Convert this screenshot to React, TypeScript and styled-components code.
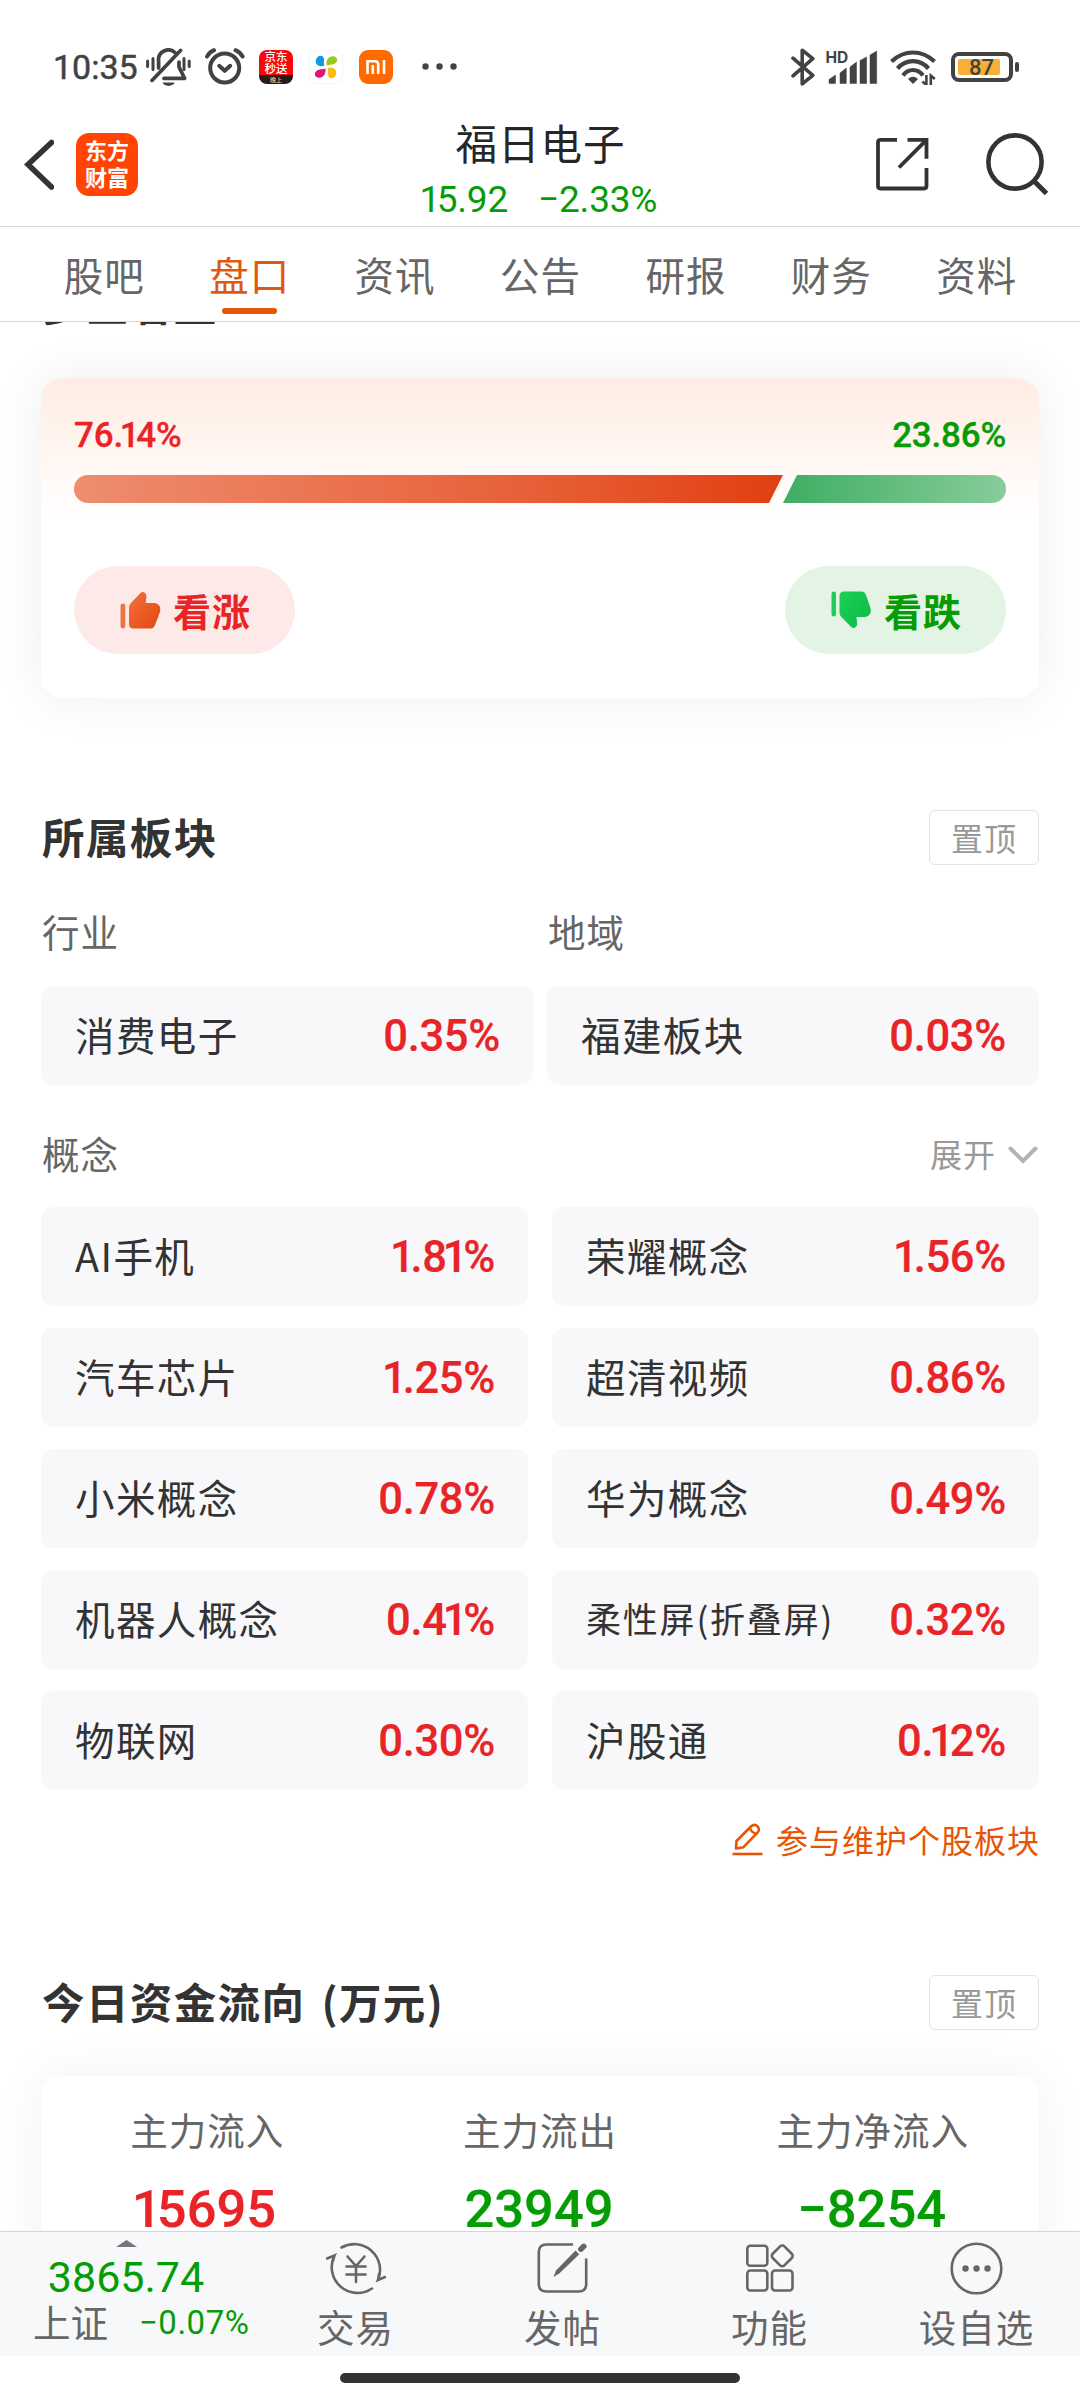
import React from 'react';
import styled, { createGlobalStyle } from 'styled-components';

const RED = '#e92427';
const GREEN = '#069c06';
const ORANGE = '#e65506';
const CJK = "'Noto Sans CJK SC', sans-serif";
const NUM = "Roboto, 'Noto Sans CJK SC', sans-serif";

const GlobalStyle = createGlobalStyle`
  *, *::before, *::after { box-sizing: border-box; }
  body { margin: 0; background: #fff; font-family: ${CJK}; }
  svg { display: block; flex: none; }
`;

const Page = styled.div`
  width: 1080px;
  height: 2400px;
  display: flex;
  flex-direction: column;
  overflow: hidden;
  background: #fff;
  color: #333;
`;

/* ---------- status bar ---------- */

const StatusBar = styled.div`
  flex: none;
  height: 88px;
  padding: 45px 61px 0 53px;
  display: flex;
  justify-content: space-between;
`;

const StatusGroup = styled.div`
  height: 43px;
  display: flex;
  align-items: center;
`;

const Slot = styled.div<{ $gap: number }>`
  margin-left: ${(p) => p.$gap}px;
  display: flex;
  align-items: center;
`;

const Clock = styled.span`
  font: 400 34px/43px Roboto, sans-serif;
  color: #424242;
  width: 87px;
  padding-top: 2px;
  white-space: nowrap;
  -webkit-text-stroke: 0.5px #424242;
`;

const JdBadge = styled.div`
  width: 34px;
  height: 34px;
  border-radius: 8px;
  overflow: hidden;
  background: linear-gradient(#f50a0c 0 25px, #2a1a18 25px);
  color: #fff;
  font: 500 11.5px/12px ${CJK};
  text-align: center;
`;

const JdFoot = styled.div`
  font-size: 6px;
  line-height: 11px;
  color: #e8c9a0;
`;

const Petals = styled.div`
  width: 34px;
  height: 34px;
  border-radius: 8px;
  border: 1px solid #f5f5f5;
  display: flex;
  align-items: center;
  justify-content: center;
`;

const MiBadge = styled.div`
  width: 34px;
  height: 34px;
  border-radius: 9px;
  background: #ff6a00;
  display: flex;
  align-items: center;
  justify-content: center;
`;

const Battery = styled.div`
  width: 62px;
  height: 30px;
  border: 4px solid #424242;
  border-radius: 8px;
  padding: 3px;
`;

const BatteryFill = styled.div`
  width: 42px;
  height: 16px;
  border-radius: 2px;
  background: #f7af38;
  color: #424242;
  font: 500 22px/18px Roboto, sans-serif;
  padding-left: 11px;
`;

const BatteryTip = styled.div`
  width: 4px;
  height: 10px;
  margin-left: 2px;
  border-radius: 2px;
  background: #424242;
`;

/* ---------- nav bar ---------- */

const NavBar = styled.header`
  flex: none;
  height: 139px;
  border-bottom: 1px solid #d6d6d6;
  display: grid;
  grid-template-columns: 1fr auto 1fr;
`;

const NavLeft = styled.div`
  padding: 45px 0 0 24px;
  display: flex;
  gap: 22px;
`;

const NavRight = styled.div`
  padding: 45px 31px 0 0;
  display: flex;
  justify-content: flex-end;
  gap: 57px;
`;

const Logo = styled.div`
  width: 62px;
  height: 63px;
  border-radius: 13px;
  background: #ff4403;
  color: #fff;
  font: 700 22px/27px ${CJK};
  padding-top: 3px;
  text-align: center;
`;

const StockHead = styled.div`
  display: flex;
  flex-direction: column;
  align-items: center;
`;

const StockName = styled.h1`
  margin: 26px 0 0 1px;
  font: 400 41.5px/56px ${CJK};
  letter-spacing: 1px;
  color: #262626;
`;

const StockQuote = styled.div`
  display: flex;
  gap: 30px;
  font: 400 37px/44px ${NUM};
  letter-spacing: -0.2px;
  margin-top: 8px;
  color: ${GREEN};
`;

/* ---------- tabs ---------- */

const TabBar = styled.nav`
  flex: none;
  height: 95px;
  padding: 0 31px;
  border-bottom: 1px solid #d6d6d6;
  display: grid;
  grid-template-columns: repeat(7, 1fr);
`;

const Tab = styled.div<{ $active?: boolean }>`
  display: flex;
  flex-direction: column;
  align-items: center;
  padding-top: 19px;
  padding-left: 1px;
  font-size: 39.5px;
  line-height: 56px;
  letter-spacing: 1px;
  color: ${(p) => (p.$active ? '#dd5a10' : '#666')};
  &::after {
    content: '';
    width: 55px;
    height: 6px;
    margin-top: 6px;
    border-radius: 3px;
    background: ${(p) => (p.$active ? ORANGE : 'transparent')};
  }
`;

/* ---------- content ---------- */

const Content = styled.main`
  flex: 1;
  min-height: 0;
  overflow: hidden;
  padding: 0 41px;
`;

const ScrolledHead = styled.div`
  height: 5px;
  display: flex;
  align-items: flex-end;
  overflow: hidden;
`;

const SectionTitle = styled.h2`
  margin: 0;
  padding: 0 0 3px 1px;
  font: 700 42.5px/48px ${CJK};
  letter-spacing: 1.4px;
  word-spacing: 5px;
  color: #333;
  white-space: nowrap;
`;

const ScrolledTitle = styled(SectionTitle)`
  padding-bottom: 0;
`;

const VoteCard = styled.section`
  margin-top: 51px;
  height: 320px;
  padding: 34px 33px 0;
  border-radius: 22px;
  background: linear-gradient(#ffece4 0, #fff4ee 60px, #fff 136px);
  box-shadow: 0 0 52px rgba(0, 0, 0, 0.07);
`;

const Between = styled.div`
  display: flex;
  align-items: center;
  justify-content: space-between;
`;

const VotePercent = styled.span<{ $color: string }>`
  font: 500 35px/46px ${NUM};
  letter-spacing: -0.2px;
  -webkit-text-stroke: 0.3px ${(p) => p.$color};
  color: ${(p) => p.$color};
  padding-top: 1px;
`;

const VoteBar = styled.div`
  display: flex;
  height: 28px;
  margin-top: 16px;
  border-radius: 14px;
  overflow: hidden;
`;

const BullBar = styled.div`
  width: 709px;
  background: linear-gradient(90deg, #ee8d70, #e75f36 65%, #e13f12);
  clip-path: polygon(0 0, 100% 0, calc(100% - 14px) 100%, 0 100%);
`;

const BearBar = styled.div`
  flex: 1;
  background: linear-gradient(90deg, #3eae62, #88cc9b);
  clip-path: polygon(14px 0, 100% 0, 100% 100%, 0 100%);
`;

const VoteButton = styled.div<{ $bg: string; $color: string }>`
  width: 221px;
  height: 88px;
  margin-top: 63px;
  padding: 0 0 1px 46px;
  border-radius: 44px;
  display: flex;
  align-items: center;
  gap: 12px;
  background: ${(p) => p.$bg};
  color: ${(p) => p.$color};
  font: 700 38px/56px ${CJK};
  letter-spacing: 1px;
`;

const SectionHead = styled(Between)<{ $top: number }>`
  margin-top: ${(p) => p.$top}px;
  height: 55px;
`;

const PinButton = styled.div`
  width: 110px;
  height: 55px;
  border: 1px solid #e2e2e2;
  border-radius: 6px;
  text-align: center;
  font-size: 32px;
  line-height: 52px;
  letter-spacing: 1px;
  color: #999;
`;

const TwoCol = styled.div<{ $gap: number; $top: number }>`
  display: grid;
  grid-template-columns: 1fr 1fr;
  column-gap: ${(p) => p.$gap}px;
  row-gap: 22px;
  margin-top: ${(p) => p.$top}px;
`;

const GroupLabel = styled.div`
  height: 54px;
  padding-left: 1px;
  font-size: 37.5px;
  line-height: 49px;
  letter-spacing: 1px;
  color: #666;
`;

const Expand = styled.div`
  display: flex;
  align-items: center;
  gap: 12px;
  color: #999;
`;

const ExpandLabel = styled.span`
  padding-bottom: 4px;
  font-size: 32px;
  line-height: 50px;
  letter-spacing: 1px;
`;

const BoardCell = styled(Between)`
  height: 99px;
  padding: 0 33px 0 34px;
  border-radius: 12px;
  background: #f8f8fb;
`;

const BoardName = styled.span<{ $small?: boolean }>`
  font-size: ${(p) => (p.$small ? 35 : 39.5)}px;
  letter-spacing: ${(p) => (p.$small ? 1.8 : 1.4)}px;
  line-height: 56px;
  padding-bottom: 3px;
  white-space: nowrap;
  color: #333;
`;

const BoardChange = styled.span`
  font: 500 43.5px/54px ${NUM};
  letter-spacing: -0.3px;
  padding-top: 2px;
  -webkit-text-stroke: 0.2px ${RED};
  color: ${RED};
`;

const MaintainLink = styled.div`
  margin: 22px -1px 0 0;
  height: 54px;
  display: flex;
  align-items: center;
  justify-content: flex-end;
  gap: 13px;
  font-size: 32px;
  letter-spacing: 1px;
  color: ${ORANGE};
`;

const FlowCard = styled.section`
  margin-top: 46px;
  height: 320px;
  padding-top: 26px;
  border-radius: 18px;
  background: #fff;
  box-shadow: 0 0 52px rgba(0, 0, 0, 0.06);
  display: grid;
  grid-template-columns: repeat(3, 1fr);
`;

const FlowItem = styled.div`
  text-align: center;
`;

const FlowLabel = styled.div`
  font-size: 37.5px;
  line-height: 54px;
  letter-spacing: 1px;
  color: #666;
`;

const FlowValue = styled.div<{ $color: string }>`
  margin: 22px 2px 0 0;
  font: 500 52.5px/62px ${NUM};
  -webkit-text-stroke: 0.2px ${(p) => p.$color};
  color: ${(p) => p.$color};
`;

/* Proportional "1": trims the side bearings of the tabular digit. */
const One = styled.span`
  margin: 0 -0.09em;
`;

/* ---------- bottom bar ---------- */

const BottomBar = styled.footer`
  flex: none;
  height: 125px;
  border-top: 1px solid #d4d5d8;
  background: #f7f8fa;
  display: grid;
  grid-template-columns: 252px repeat(4, 1fr);
`;

const IndexCell = styled.div`
  display: flex;
  flex-direction: column;
  align-items: center;
  padding-top: 8px;
`;

const IndexValue = styled.div`
  font: 400 43px/46px ${NUM};
  margin-top: 7px;
  color: ${GREEN};
`;

const IndexRow = styled.div`
  width: 100%;
  padding: 0 0 0 33px;
  display: flex;
  align-items: center;
  gap: 31px;
  line-height: 50px;
  margin-top: -6px;
  color: #666;
  font-size: 37.5px;
  white-space: nowrap;
`;

const IndexChange = styled.span`
  font: 400 33px/50px ${NUM};
  letter-spacing: 0.5px;
  padding-top: 4px;
  color: ${GREEN};
`;

const Action = styled.div`
  display: flex;
  flex-direction: column;
  align-items: center;
  padding-top: 9px;
  font-size: 37.5px;
  letter-spacing: 1px;
  line-height: 54px;
  color: #666;
`;

const ActionIcon = styled.div`
  height: 54px;
  margin-bottom: 4px;
  display: flex;
  align-items: center;
`;

const HomeArea = styled.div`
  flex: none;
  height: 44px;
  padding-top: 17px;
  display: flex;
  justify-content: center;
`;

const HomeBar = styled.div`
  width: 400px;
  height: 10px;
  border-radius: 5px;
  background: #333;
`;

/* ---------- icons ---------- */

const BellOff = () => (
  <svg width="45" height="38" viewBox="0 0 45 38" fill="none" stroke="#424242" strokeWidth="3.7" strokeLinecap="round">
    <path d="M12.6 20V13a9.8 9.8 0 0 1 16.6-8.2M33 14v5l5.6 11.4H18" strokeLinejoin="round" />
    <path d="M34.5 2.4 6 32.4" />
    <path d="M16.6 34.6h12c-1.4 4.4-10.6 4.4-12 0z" fill="#424242" stroke="none" />
    <path d="M1.6 13v5.5M7 10.500v11M38 10.500v11M43.200 13v5.500" strokeWidth="3" />
  </svg>
);

const Alarm = () => (
  <svg width="40" height="37" viewBox="0 0 40 37" fill="none" stroke="#424242" strokeWidth="4" strokeLinecap="round">
    <circle cx="19.700" cy="20" r="14.500" />
    <path d="M14.200 17.800l5.500 5 5.500-5" strokeLinejoin="round" />
    <path d="M2 8.600Q4.500 4 9 2.200M37.600 8.600Q35 4 30.500 2.200" />
  </svg>
);

const PetalMark = () => (
  <svg width="24" height="24" viewBox="0 0 24 24">
    <path d="M10.500 10.800C4 12.500.8 9 2 4.500 3.500-.5 9.500-.5 10 4c.3 2.500-.8 4 .5 6.800z" fill="#0a9be3" />
    <path d="M12.500 10.500C12 4.500 15 1 19.500 1.200c5 .5 4.500 6.300.5 7.800-2.500 1-5 .3-7.500 1.500z" fill="#98c91e" />
    <path d="M11.500 13.500C12 19.500 9 23 4.500 22.800c-5-.5-4.500-6.300-.5-7.800 2.500-1 5-.3 7.500-1.500z" fill="#e2127c" />
    <path d="M13.500 13.200c6.500-1.700 9.700 1.800 8.500 6.300-1.500 5-7.500 5-8 .5-.3-2.500.8-4-.5-6.800z" fill="#fbbd08" />
  </svg>
);

const MiMark = () => (
  <svg width="20" height="14" viewBox="0 0 20 14" fill="none" stroke="#fff" strokeWidth="2.600">
    <path d="M1.500 14V1.300h7.500q3.200 0 3.200 3.200V14M6.800 5v9M18 0v14" />
  </svg>
);

const Dots = () => (
  <svg width="35" height="7" viewBox="0 0 35 7" fill="#424242">
    <circle cx="3.500" cy="3.500" r="3.200" />
    <circle cx="17.500" cy="3.500" r="3.200" />
    <circle cx="31.500" cy="3.500" r="3.200" />
  </svg>
);

const Bluetooth = () => (
  <svg width="24" height="38" viewBox="0 0 24 38" fill="none" stroke="#424242" strokeWidth="3.600" strokeLinecap="round" strokeLinejoin="round">
    <path d="M2 10.200 21.800 27.300 11.200 35.800V2.200L21.800 10.700 2 27.800" />
  </svg>
);

const HdText = styled.text`
  font: 700 15.5px Inter, sans-serif;
  fill: #424242;
`;

const Signal = () => (
  <svg width="50" height="34" viewBox="0 0 50 34" fill="#424242" overflow="visible">
    <HdText x="-1.500" y="13">HD</HdText>
    <path d="M2 33V29.500l6.500-4.500v8.500H2.500zM13 33.500V23l6.300-5v15.500zM23 33.500V17l6.500-5v21.500zM33 33.500V10.500L39.600 7v26.500zM43 33.500V5l6.700-4v32.500z" stroke="#424242" strokeWidth=".5" strokeLinejoin="round" />
  </svg>
);

const Wifi = () => (
  <svg width="46" height="36" viewBox="0 0 46 36" fill="none" stroke="#424242" strokeWidth="4.200">
    <path d="M1.500 12.500Q11 3.500 23 3.500t21.500 9M7.500 19.500Q14 12.200 23 12.200t15.500 7.300M13 26.500Q17 21 23 21t10 5.500" />
    <path d="M18 30q5-4.500 10 0l-5 5z" fill="#424242" stroke="none" />
    <path d="M36.400 26v10l-4-3.500M40.800 36V26.500l4 3.500" strokeWidth="2.600" />
  </svg>
);

const Back = () => (
  <svg width="30" height="63" viewBox="0 0 30 63" fill="none" stroke="#333" strokeWidth="5.600" strokeLinecap="round">
    <path d="M27.500 9.500 4 31.500 27.500 54" strokeLinejoin="miter" />
  </svg>
);

const Share = () => (
  <svg width="53" height="63" viewBox="0 0 53 63" fill="none" stroke="#333" strokeWidth="3.800">
    <path d="M21 6.800H4.500Q2 6.800 2 9.300V53q0 2.500 2.500 2.500h43.500q2.500 0 2.500-2.500V35M31.500 6.800h19v19M50.500 6.800 23 34.500" />
  </svg>
);

const Search = () => (
  <svg width="63" height="63" viewBox="0 0 63 63" fill="none" stroke="#333">
    <circle cx="29" cy="29" r="26.600" strokeWidth="4.600" />
    <path d="M48 48 60.500 60.500" strokeWidth="5" />
  </svg>
);

const ThumbUp = () => (
  <svg width="41" height="38" viewBox="0 0 41 38">
    <defs>
      <linearGradient id="up" x1="0" y1="0" x2="1" y2="1">
        <stop offset="0" stopColor="#f7703f" />
        <stop offset="1" stopColor="#e0470f" />
      </linearGradient>
    </defs>
    <rect x=".5" y="12.500" width="4.800" height="25" rx="2.400" fill="#ec7344" />
    <path d="M9 16.500q0-2.500 1.700-4.200L20 2.500q2.500-2.500 5-.5 1.700 1.500 1.500 3.500l-.8 6.500H35q7 2 4.800 9.500l-5 13q-1.200 3-4.300 3H13.500q-4.500 0-4.500-4.500z" fill="url(#up)" />
  </svg>
);

const ThumbDown = () => (
  <svg width="41" height="38" viewBox="0 0 41 38">
    <defs>
      <linearGradient id="down" x1="0" y1="0" x2="1" y2="1">
        <stop offset="0" stopColor="#1bd057" />
        <stop offset="1" stopColor="#0cb948" />
      </linearGradient>
    </defs>
    <rect x=".5" y=".5" width="4.500" height="25" rx="2.200" fill="#1fcb5a" />
    <path d="M8.500 21.500q0 2.500 1.700 4.200l9.500 9.800q2.500 2.500 5 .5 1.700-1.500 1.500-3.500l-.8-6.500H34.500q7-2 4.800-9.500l-4.500-13q-1.200-3-4.300-3H13q-4.500 0-4.500 4.500z" fill="url(#down)" />
  </svg>
);

const ChevronDown = () => (
  <svg width="31" height="18" viewBox="0 0 31 18" fill="none" stroke="#b3b3b3" strokeWidth="4" strokeLinecap="round">
    <path d="M2.500 2.500 15 15 27.500 2.500" />
  </svg>
);

const Pencil = () => (
  <svg width="31" height="33" viewBox="0 0 31 33" fill="none" stroke={ORANGE} strokeWidth="2.600" strokeLinejoin="round">
    <path d="M4 25.500 4.500 18 19.500 3q3-2.500 6 .3 2.700 3 .2 6L11.500 24.200zM18 5q1.500 5 7.500 6" />
    <path d="M.5 31h30" />
  </svg>
);

const Trade = () => (
  <svg width="60" height="54" viewBox="0 0 60 54" fill="none" stroke="#666" strokeWidth="2.600" strokeLinecap="round">
    <path d="M15.500 6.500A25.800 25.800 0 0 1 52 39l7-3M52 39l1-6" />
    <path d="M46 47.500A25.800 25.800 0 0 1 8.500 14.500L1 17.500M8.500 14.500 7 20" />
    <path d="M21.500 15.500 30 25l8.500-9.500M20.500 25.500h19M20.500 33.500h19M30 25v16" />
  </svg>
);

const Post = () => (
  <svg width="52" height="52" viewBox="0 0 52 52" fill="none" stroke="#666" strokeWidth="2.600">
    <path d="M36 2.500H9.500Q1.800 2.500 1.800 10v32q0 7.500 7.700 7.500h32q7.700 0 7.700-7.500V16.500" />
    <path d="M38.500 8.500 42.300 12.300 22.500 31.300 16.500 35 19 28.500z" fill="#666" stroke="none" />
    <path d="M43.800 7.200 46.800 4.300" strokeWidth="5.500" strokeLinecap="round" />
  </svg>
);

const Apps = () => (
  <svg width="50" height="50" viewBox="0 0 50 50" fill="none" stroke="#666" strokeWidth="2.600">
    <rect x="2.300" y="2.800" width="20" height="20" rx="3" />
    <rect x="2.300" y="27.500" width="20" height="20" rx="3" />
    <rect x="27" y="27.500" width="20.500" height="20" rx="3" />
    <rect x="29" y="4.600" width="16.500" height="16.500" rx="3" transform="rotate(45 37.250 12.850)" />
  </svg>
);

const More = () => (
  <svg width="53" height="53" viewBox="0 0 53 53">
    <circle cx="26.500" cy="26.500" r="24.800" fill="none" stroke="#666" strokeWidth="2.600" />
    <g fill="#666">
      <circle cx="15.500" cy="26.500" r="3.200" />
      <circle cx="26.500" cy="26.500" r="3.200" />
      <circle cx="37.500" cy="26.500" r="3.200" />
    </g>
  </svg>
);

const UpMark = () => (
  <svg width="21" height="7" viewBox="0 0 21 7">
    <path d="M10.500 0 21 7H0z" fill="#75757a" />
  </svg>
);

/* ---------- data ---------- */

const tabs = ['股吧', '盘口', '资讯', '公告', '研报', '财务', '资料'];

const sectors = [
  { name: '消费电子', change: '0.35%' },
  { name: '福建板块', change: '0.03%' },
];

const concepts = [
  { name: 'AI手机', change: '1.81%' },
  { name: '荣耀概念', change: '1.56%' },
  { name: '汽车芯片', change: '1.25%' },
  { name: '超清视频', change: '0.86%' },
  { name: '小米概念', change: '0.78%' },
  { name: '华为概念', change: '0.49%' },
  { name: '机器人概念', change: '0.41%' },
  { name: '柔性屏(折叠屏)', change: '0.32%' },
  { name: '物联网', change: '0.30%' },
  { name: '沪股通', change: '0.12%' },
];

const flows = [
  { label: '主力流入', value: '15695', color: RED },
  { label: '主力流出', value: '23949', color: GREEN },
  { label: '主力净流入', value: '−8254', color: GREEN },
];

const actions = [
  { label: '交易', icon: <Trade /> },
  { label: '发帖', icon: <Post /> },
  { label: '功能', icon: <Apps /> },
  { label: '设自选', icon: <More /> },
];

const Num = ({ value }: { value: string }) => (
  <>
    {value.split(/(1)/).map((part, i) =>
      part === '1' ? <One key={i}>1</One> : part,
    )}
  </>
);

const Board = ({ name, change }: { name: string; change: string }) => (
  <BoardCell>
    <BoardName $small={name.length > 6}>{name}</BoardName>
    <BoardChange><Num value={change} /></BoardChange>
  </BoardCell>
);

export default function App() {
  return (
    <Page>
      <GlobalStyle />
      <StatusBar>
        <StatusGroup>
          <Clock>10:35</Clock>
          <Slot $gap={6}><BellOff /></Slot>
          <Slot $gap={14}><Alarm /></Slot>
          <Slot $gap={14}>
            <JdBadge>京东<br />秒送<JdFoot>晚上</JdFoot></JdBadge>
          </Slot>
          <Slot $gap={16}><Petals><PetalMark /></Petals></Slot>
          <Slot $gap={16}><MiBadge><MiMark /></MiBadge></Slot>
          <Slot $gap={29}><Dots /></Slot>
        </StatusGroup>
        <StatusGroup>
          <Bluetooth />
          <Slot $gap={12}><Signal /></Slot>
          <Slot $gap={13}><Wifi /></Slot>
          <Slot $gap={15}>
            <Battery><BatteryFill>87</BatteryFill></Battery>
            <BatteryTip />
          </Slot>
        </StatusGroup>
      </StatusBar>

      <NavBar>
        <NavLeft>
          <Back />
          <Logo>东方<br />财富</Logo>
        </NavLeft>
        <StockHead>
          <StockName>福日电子</StockName>
          <StockQuote>
            <span><Num value="15.92" /></span>
            <span>−2.33%</span>
          </StockQuote>
        </StockHead>
        <NavRight>
          <Share />
          <Search />
        </NavRight>
      </NavBar>

      <TabBar>
        {tabs.map((t) => (
          <Tab key={t} $active={t === '盘口'}>{t}</Tab>
        ))}
      </TabBar>

      <Content>
        <ScrolledHead>
          <ScrolledTitle>多空看盘</ScrolledTitle>
        </ScrolledHead>
        <VoteCard>
          <Between>
            <VotePercent $color={RED}><Num value="76.14%" /></VotePercent>
            <VotePercent $color={GREEN}>23.86%</VotePercent>
          </Between>
          <VoteBar>
            <BullBar />
            <BearBar />
          </VoteBar>
          <Between>
            <VoteButton $bg="#fde9e8" $color={RED}><ThumbUp />看涨</VoteButton>
            <VoteButton $bg="#e3f4e4" $color={GREEN}><ThumbDown />看跌</VoteButton>
          </Between>
        </VoteCard>

        <SectionHead $top={112}>
          <SectionTitle>所属板块</SectionTitle>
          <PinButton>置顶</PinButton>
        </SectionHead>
        <TwoCol $gap={14} $top={41}>
          <GroupLabel>行业</GroupLabel>
          <GroupLabel>地域</GroupLabel>
        </TwoCol>
        <TwoCol $gap={14} $top={26}>
          {sectors.map((s) => <Board key={s.name} {...s} />)}
        </TwoCol>
        <SectionHead $top={42}>
          <GroupLabel>概念</GroupLabel>
          <Expand><ExpandLabel>展开</ExpandLabel><ChevronDown /></Expand>
        </SectionHead>
        <TwoCol $gap={24} $top={25}>
          {concepts.map((c) => <Board key={c.name} {...c} />)}
        </TwoCol>
        <MaintainLink><Pencil />参与维护个股板块</MaintainLink>

        <SectionHead $top={109}>
          <SectionTitle>今日资金流向 (万元)</SectionTitle>
          <PinButton>置顶</PinButton>
        </SectionHead>
        <FlowCard>
          {flows.map((f) => (
            <FlowItem key={f.label}>
              <FlowLabel>{f.label}</FlowLabel>
              <FlowValue $color={f.color}><Num value={f.value} /></FlowValue>
            </FlowItem>
          ))}
        </FlowCard>
      </Content>

      <BottomBar>
        <IndexCell>
          <UpMark />
          <IndexValue>3865.74</IndexValue>
          <IndexRow>上证<IndexChange>−0.07%</IndexChange></IndexRow>
        </IndexCell>
        {actions.map((a) => (
          <Action key={a.label}>
            <ActionIcon>{a.icon}</ActionIcon>
            {a.label}
          </Action>
        ))}
      </BottomBar>
      <HomeArea><HomeBar /></HomeArea>
    </Page>
  );
}
